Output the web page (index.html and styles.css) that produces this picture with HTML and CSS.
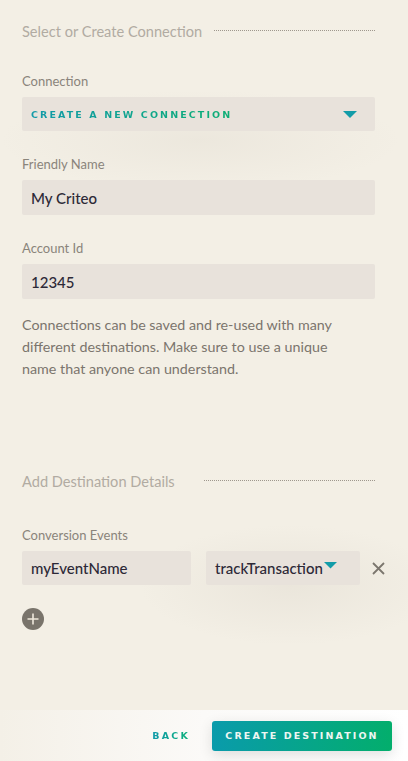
FILE: index.html
```
<!DOCTYPE html>
<html>
<head>
<meta charset="utf-8">
<link rel="stylesheet" href="styles.css">
</head>
<body>
<div class="page">
  <main class="content">
    <section class="section">
      <div class="section-head">
        <span class="section-title">Select or Create Connection</span>
        <span class="dots"></span>
      </div>
      <div class="field first">
        <label class="label">Connection</label>
        <div class="box select">
          <span class="caps">CREATE A NEW CONNECTION</span>
          <svg class="caret" width="14" height="8" viewBox="0 0 14 8"><path d="M0 0H14L7 7Z" fill="#129ca8"/></svg>
        </div>
      </div>
      <div class="field">
        <label class="label">Friendly Name</label>
        <div class="box input">My Criteo</div>
      </div>
      <div class="field">
        <label class="label">Account Id</label>
        <div class="box input">12345</div>
      </div>
      <p class="help">Connections can be saved and re-used with many different destinations. Make sure to use a unique name that anyone can understand.</p>
    </section>

    <section class="section second">
      <div class="section-head">
        <span class="section-title">Add Destination Details</span>
        <span class="dots"></span>
      </div>
      <div class="field first2">
        <label class="label">Conversion Events</label>
        <div class="event-row">
          <div class="box input ev-name">myEventName</div>
          <div class="box input ev-type">trackTransaction<svg class="caret-sm" width="13" height="7" viewBox="0 0 13 7"><path d="M0 0H13L6.5 6.5Z" fill="#129ca8"/></svg></div>
          <svg class="close" width="13" height="13" viewBox="0 0 13 13"><path d="M1 1L12 12M12 1L1 12" stroke="#7b766e" stroke-width="1.8"/></svg>
        </div>
      </div>
      <button class="add" aria-label="add"><svg width="22" height="22" viewBox="0 0 22 22"><circle cx="11" cy="11" r="11" fill="#79746b"/><path d="M11 5.5V16.5M5.5 11H16.5" stroke="#efe9dc" stroke-width="1.6"/></svg></button>
    </section>
  </main>
  <footer class="footer">
    <button class="back"><span class="grad-text">BACK</span></button>
    <button class="create">CREATE DESTINATION</button>
  </footer>
</div>
</body>
</html>
```
FILE: styles.css
```
* { box-sizing: border-box; }
html, body { margin: 0; padding: 0; }
body {
  width: 408px;
  height: 761px;
  font-family: Lato, "Noto Sans", sans-serif;
  background: #f3efe5;
  overflow: hidden;
}
.page {
  height: 761px;
  display: flex;
  flex-direction: column;
  background:
    radial-gradient(ellipse 150px 60px at 290px 585px, rgba(200,192,180,0.2), rgba(200,192,180,0)),
    radial-gradient(ellipse 200px 50px at 200px 140px, rgba(200,192,180,0.16), rgba(200,192,180,0)),
    #f3efe5;
}
.content {
  flex: 1;
  padding: 22px 33px 0 22px;
}
.section-head {
  display: flex;
  align-items: center;
  height: 18px;
}
.section-title {
  font-size: 14.6px;
  color: #b1aba2;
  white-space: nowrap;
}
.dots {
  flex: 1;
  margin-left: 12px;
  border-top: 1px dotted #9e978d;
  height: 0;
  margin-top: -2px;
}
.second .dots { margin-left: 29px; }
.field { margin-top: 26px; }
.field.first { margin-top: 34px; }
.label {
  display: block;
  font-size: 13px;
  color: #8a847b;
  height: 15px;
  line-height: 15px;
  margin-bottom: 8px;
}
.box {
  background: #e8e2db;
  border-radius: 2px;
  height: 35px;
  display: flex;
  align-items: center;
  padding: 0 9px;
}
.select { justify-content: space-between; padding-right: 18px; height: 34px; }
.caps {
  font-family: "DejaVu Sans", sans-serif;
  font-size: 9.5px;
  font-weight: bold;
  letter-spacing: 2.1px;
  background: linear-gradient(90deg, #129aa9, #0cae74);
  -webkit-background-clip: text;
  background-clip: text;
  color: transparent;
}
.caret { margin-top: 1px; }
.input {
  font-size: 15px;
  color: #2d2937;
  font-weight: 500;
}
.help {
  margin: 15px 0 0;
  font-size: 14.3px;
  line-height: 22px;
  color: #7b756d;
  width: 330px;
}
.second { margin-top: 92px; }
.first2 { margin-top: 38px; }
.event-row {
  display: flex;
  align-items: center;
}
.ev-name { flex: none; width: 169px; height: 34px; }
.ev-type { flex: none; width: 154px; margin-left: 15px; height: 34px; }
.caret-sm { margin-left: 1px; margin-top: -6px; }
.close { flex: none; margin-left: 12px; }
.add {
  margin-top: 23px;
  padding: 0;
  border: 0;
  background: none;
  display: block;
  width: 22px;
  height: 22px;
}
.footer {
  height: 51px;
  flex: none;
  display: flex;
  align-items: center;
  justify-content: flex-end;
  padding-right: 16px;
  background: linear-gradient(90deg, #f4f0e7 0%, #fbfaf8 50%, #ffffff 100%);
}
.back {
  border: 0;
  background: none;
  padding: 0;
  margin-right: 22px;
  font-family: "DejaVu Sans", sans-serif;
  font-size: 9.5px;
  font-weight: bold;
  letter-spacing: 2.2px;
}
.grad-text {
  background: linear-gradient(90deg, #119aab, #0cb07a);
  -webkit-background-clip: text;
  background-clip: text;
  color: transparent;
}
.create {
  border: 0;
  border-radius: 3px;
  width: 180px;
  height: 30px;
  background: linear-gradient(90deg, #0a9bab, #03ae6c);
  color: #eef6f2;
  font-family: "DejaVu Sans", sans-serif;
  font-size: 9.5px;
  font-weight: bold;
  letter-spacing: 2.1px;
  box-shadow: 0 4px 14px rgba(0,0,0,0.12);
  padding: 0;
}
```
